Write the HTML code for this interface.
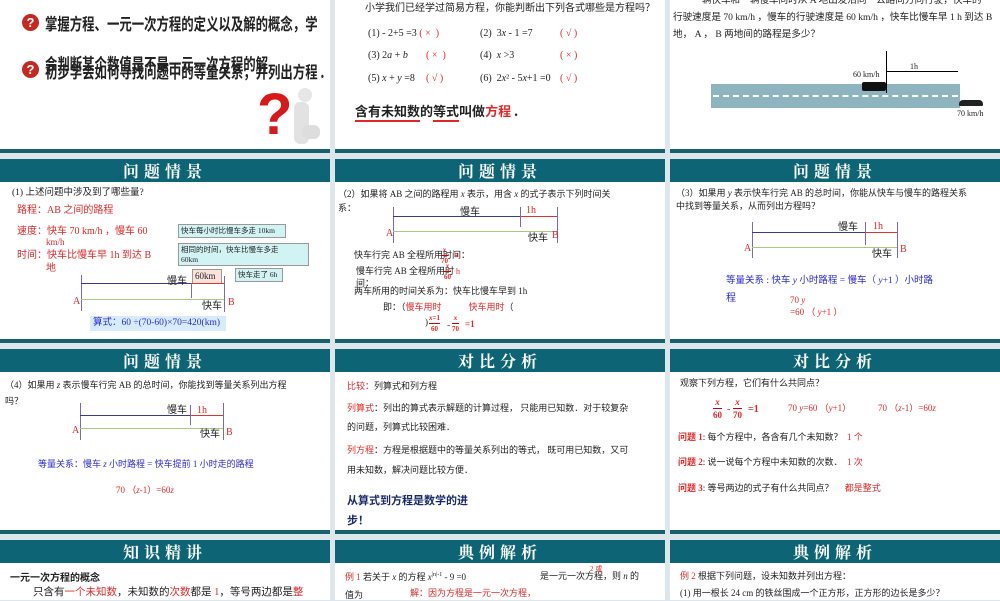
<!DOCTYPE html>
<html><head><meta charset="utf-8"><style>
*{margin:0;padding:0;box-sizing:border-box}
body{width:1000px;height:600px;overflow:hidden;background:#dde6ea;position:relative;font-family:"Liberation Serif","Noto Sans CJK SC",serif;color:#222}
.w{position:absolute;background:#fff}
.s{position:absolute;background:#17606e;height:4px}
.h{position:absolute;background:#0c6475;height:23px;color:#fff;text-align:center;font:bold 16px/23px "Noto Serif CJK SC","Noto Sans CJK SC",serif;letter-spacing:5px}
.t{position:absolute;white-space:nowrap;font-size:10px;line-height:1.1}
.r{color:#e02828}.b{color:#2a2ad8}
.l{position:absolute}
.q{position:absolute;width:17px;height:17px;border-radius:50%;background:#c42a22;color:#fff;font:bold 13px/17px "Liberation Sans",sans-serif;text-align:center}
.bx{position:absolute;background:#d2f3f3;border:1px solid #999;font-size:7.5px;padding:1px 2px;line-height:1.35;white-space:nowrap}
.fr{position:absolute;font-size:8px;text-align:center;line-height:1;font-weight:bold}
.fr span{display:block;border-top:1px solid #c00;padding-top:2px;margin-top:1px}
.big{font:bold 12.4px/1 'Noto Sans CJK SC',sans-serif;transform:scaleY(1.35);transform-origin:0 0}
</style></head><body>
<div class="w" style="left:0;top:0;width:330px;height:149px"></div>
<div class="w" style="left:335px;top:0;width:330px;height:149px"></div>
<div class="w" style="left:670px;top:0;width:330px;height:149px"></div>
<div class="s" style="left:0;top:149px;width:330px"></div><div class="s" style="left:335px;top:149px;width:330px"></div><div class="s" style="left:670px;top:149px;width:330px"></div>

<div class="h" style="left:0;top:159px;width:330px">问题情景</div><div class="h" style="left:335px;top:159px;width:330px">问题情景</div><div class="h" style="left:670px;top:159px;width:330px">问题情景</div>
<div class="w" style="left:0;top:182px;width:330px;height:157px"></div><div class="w" style="left:335px;top:182px;width:330px;height:157px"></div><div class="w" style="left:670px;top:182px;width:330px;height:157px"></div>
<div class="s" style="left:0;top:339px;width:330px"></div><div class="s" style="left:335px;top:339px;width:330px"></div><div class="s" style="left:670px;top:339px;width:330px"></div>

<div class="h" style="left:0;top:349px;width:330px">问题情景</div><div class="h" style="left:335px;top:349px;width:330px">对比分析</div><div class="h" style="left:670px;top:349px;width:330px">对比分析</div>
<div class="w" style="left:0;top:372px;width:330px;height:158px"></div><div class="w" style="left:335px;top:372px;width:330px;height:158px"></div><div class="w" style="left:670px;top:372px;width:330px;height:158px"></div>
<div class="s" style="left:0;top:530px;width:330px"></div><div class="s" style="left:335px;top:530px;width:330px"></div><div class="s" style="left:670px;top:530px;width:330px"></div>

<div class="h" style="left:0;top:540px;width:330px">知识精讲</div><div class="h" style="left:335px;top:540px;width:330px">典例解析</div><div class="h" style="left:670px;top:540px;width:330px">典例解析</div>
<div class="w" style="left:0;top:563px;width:330px;height:37px"></div><div class="w" style="left:335px;top:563px;width:330px;height:37px"></div><div class="w" style="left:670px;top:563px;width:330px;height:37px"></div>

<!-- Row1 col1 -->
<div class="q" style="left:22px;top:14px">?</div>
<div class="t big" style="left:45px;top:15px">掌握方程、一元一次方程的定义以及解的概念，学</div>
<div class="q" style="left:22px;top:61px">?</div>
<div class="t big" style="left:45px;top:55px">会判断某个数值是不是一元一次方程的解</div>
<div class="t big" style="left:45px;top:63px">初步学会如何寻找问题中的等量关系，并列出方程 .</div>
<div class="t" style="left:257px;top:86px;font:bold 58px/1 'Liberation Sans',sans-serif;color:#d8191a">?</div>
<div class="l" style="left:298px;top:88px;width:14px;height:14px;border-radius:50%;background:#e6e6e6"></div>
<div class="l" style="left:294px;top:102px;width:15px;height:42px;border-radius:6px;background:#e2e2e2"></div>
<div class="l" style="left:302px;top:125px;width:18px;height:14px;border-radius:6px;background:#ddd"></div>

<!-- Row1 col2 -->
<div class="t" style="left:365px;top:3px">小学我们已经学过简易方程，你能判断出下列各式哪些是方程吗？</div>
<div class="t" style="left:368px;top:28px">(1) - 2+5 =3 <span class="r">( ×&nbsp; )</span></div>
<div class="t" style="left:368px;top:50px">(3) 2<i>a</i> + <i>b</i></div><div class="t r" style="left:426px;top:50px">( × &nbsp;)</div>
<div class="t" style="left:368px;top:73px">(5) <i>x</i> + <i>y</i> =8</div><div class="t r" style="left:426px;top:73px">( √ )</div>
<div class="t" style="left:480px;top:28px">(2) &nbsp;3<i>x</i> - 1 =7</div><div class="t r" style="left:560px;top:28px">( √ )</div>
<div class="t" style="left:480px;top:50px">(4) &nbsp;<i>x</i> &gt;3</div><div class="t r" style="left:560px;top:50px">( × )</div>
<div class="t" style="left:480px;top:73px">(6) &nbsp;2<i>x</i>² - 5<i>x</i>+1 =0</div><div class="t r" style="left:560px;top:73px">( √ )</div>
<div class="t" style="left:355px;top:104px;font:bold 13px/1.1 'Noto Sans CJK SC',sans-serif"><span style="border-bottom:2px solid #e02828">含有未知数</span>的<span style="border-bottom:2px solid #e02828">等式</span>叫做<span class="r">方程</span> .</div>

<!-- Row1 col3 -->
<div class="t" style="left:673px;top:-4px;font-size:9.6px">&emsp;&emsp;一辆快车和一辆慢车同时从 A 地出发沿同一公路同方向行驶，快车的</div>
<div class="t" style="left:673px;top:13px;font-size:9.6px">行驶速度是 70 km/h ，慢车的行驶速度是 60 km/h ，快车比慢车早 1 h 到达 B</div>
<div class="t" style="left:673px;top:30px;font-size:9.6px">地， A ， B 两地间的路程是多少？</div>
<div class="l" style="left:711px;top:84px;width:249px;height:24px;background:#8db4bf"></div>
<div class="l" style="left:713px;top:95px;width:245px;border-top:2px dashed #fff"></div>
<div class="l" style="left:886px;top:51px;width:1px;height:42px;background:#000"></div>
<div class="l" style="left:886px;top:71px;width:72px;height:1px;background:#000"></div>
<div class="t" style="left:910px;top:63px;font-size:8px">1h</div>
<div class="t" style="left:853px;top:71px;font-size:8px">60 km/h</div>
<div class="l" style="left:862px;top:82px;width:24px;height:9px;background:#111;border-radius:2px"></div>
<div class="l" style="left:959px;top:100px;width:24px;height:6px;background:#222;border-radius:4px 4px 1px 1px"></div>
<div class="t" style="left:957px;top:110px;font-size:8px">70 km/h</div>

<!-- Row2 col1 -->
<div class="t" style="left:12px;top:188px;font-size:9.5px">(1) 上述问题中涉及到了哪些量?</div>
<div class="t r" style="left:17px;top:205px;font-size:10px">路程：AB 之间的路程</div>
<div class="t r" style="left:17px;top:226px;font-size:10px">速度：快车 70 km/h ，慢车 60</div>
<div class="t r" style="left:46px;top:238px;font-size:9px">km/h</div>
<div class="t r" style="left:17px;top:250px;font-size:10px">时间：快车比慢车早 1h 到达 B</div>
<div class="t r" style="left:46px;top:263px;font-size:10px">地</div>
<div class="bx" style="left:178px;top:224px;width:108px;height:14px">快车每小时比慢车多走 10km</div>
<div class="bx" style="left:178px;top:243px;width:131px;height:23px">相同的时间，快车比慢车多走<br>60km</div>
<div class="bx" style="left:235px;top:268px;width:48px;height:14px">快车走了 6h</div>
<div class="bx" style="left:192px;top:269px;width:30px;height:15px;background:#fbe3dc;font-size:9px;padding:0 2px">60km</div>
<div class="l" style="left:81px;top:275px;width:1px;height:36px;background:#7a6bb0"></div>
<div class="l" style="left:81px;top:283px;width:110px;height:1px;background:#3a3a8a"></div>
<div class="l" style="left:191px;top:283px;width:33px;height:1px;background:#d33"></div>
<div class="l" style="left:191px;top:283px;width:1px;height:15px;background:#7a6bb0"></div>
<div class="l" style="left:224px;top:276px;width:1px;height:36px;background:#7a6bb0"></div>
<div class="l" style="left:81px;top:299px;width:143px;height:1px;background:#a8c880"></div>
<div class="t r" style="left:73px;top:296px">A</div><div class="t r" style="left:228px;top:297px">B</div>
<div class="t" style="left:167px;top:276px">慢车</div><div class="t" style="left:202px;top:301px">快车</div>
<div class="l" style="left:90px;top:316px;width:136px;height:15px;background:#d6ecfb"></div>
<div class="t b" style="left:93px;top:318px;font-size:9.5px">算式：60 ÷(70-60)×70=420(km)</div>

<!-- Row2 col2 -->
<div class="t" style="left:338px;top:190px;font-size:9px">（2）如果将 AB 之间的路程用 <i>x</i> 表示，用含 <i>x</i> 的式子表示下列时间关</div>
<div class="t" style="left:338px;top:204px;font-size:9px">系：</div>
<div class="l" style="left:393px;top:207px;width:1px;height:36px;background:#7a6bb0"></div>
<div class="l" style="left:393px;top:216px;width:127px;height:1px;background:#3a3a8a"></div>
<div class="l" style="left:520px;top:216px;width:37px;height:1px;background:#d33"></div>
<div class="l" style="left:520px;top:207px;width:1px;height:20px;background:#7a6bb0"></div>
<div class="l" style="left:557px;top:207px;width:1px;height:36px;background:#7a6bb0"></div>
<div class="l" style="left:393px;top:231px;width:164px;height:1px;background:#a8c880"></div>
<div class="t r" style="left:386px;top:228px">A</div><div class="t r" style="left:552px;top:230px">B</div>
<div class="t" style="left:460px;top:207px">慢车</div><div class="t r" style="left:526px;top:205px">1h</div><div class="t" style="left:528px;top:233px">快车</div>
<div class="t" style="left:354px;top:251px;font-size:9px">快车行完 AB 全程所用时间：</div>
<div class="fr r" style="left:441px;top:247px;font-size:7px"><i>x</i><span>70</span></div><div class="t r" style="left:454px;top:251px;font-size:8px">h</div>
<div class="t" style="left:356px;top:267px;font-size:9px">慢车行完 AB 全程所用时</div>
<div class="fr r" style="left:444px;top:263px;font-size:7px"><i>x</i><span>60</span></div><div class="t r" style="left:456px;top:268px;font-size:8px">h</div>
<div class="t" style="left:356px;top:279px;font-size:9px">间：</div>
<div class="t" style="left:354px;top:287px;font-size:9px">两车所用的时间关系为：快车比慢车早到 1h</div>
<div class="t" style="left:383px;top:303px;font-size:9px">即：（<span class="r">慢车用时</span>&emsp;&emsp;&emsp;<span class="r">快车用时</span>（</div>
<div class="t" style="left:425px;top:318px;font-size:9px">)</div>
<div class="fr r" style="left:429px;top:315px;font-size:7px"><i>x</i>=1<span>60</span></div><div class="t r" style="left:447px;top:320px">-</div>
<div class="fr r" style="left:452px;top:315px;font-size:7px"><i>x</i><span>70</span></div><div class="t r" style="left:465px;top:320px;font-weight:bold;font-size:9px">=1</div>

<!-- Row2 col3 -->
<div class="t" style="left:676px;top:189px;font-size:9px">（3）如果用 <i>y</i> 表示快车行完 AB 的总时间，你能从快车与慢车的路程关系</div>
<div class="t" style="left:676px;top:202px;font-size:9px">中找到等量关系，从而列出方程吗？</div>
<div class="l" style="left:752px;top:222px;width:1px;height:36px;background:#7a6bb0"></div>
<div class="l" style="left:752px;top:232px;width:113px;height:1px;background:#3a3a8a"></div>
<div class="l" style="left:865px;top:232px;width:32px;height:1px;background:#d33"></div>
<div class="l" style="left:865px;top:222px;width:1px;height:23px;background:#7a6bb0"></div>
<div class="l" style="left:897px;top:222px;width:1px;height:36px;background:#7a6bb0"></div>
<div class="l" style="left:752px;top:247px;width:145px;height:1px;background:#a8c880"></div>
<div class="t r" style="left:744px;top:243px">A</div><div class="t r" style="left:900px;top:244px">B</div>
<div class="t" style="left:838px;top:222px">慢车</div><div class="t r" style="left:873px;top:221px">1h</div><div class="t" style="left:872px;top:249px">快车</div>
<div class="t b" style="left:726px;top:276px;font-size:9.5px">等量关系 : 快车 <i>y</i> 小时路程 = 慢车（ <i>y</i>+1 ）小时路</div>
<div class="t b" style="left:726px;top:293px">程</div>
<div class="t r" style="left:790px;top:296px;font-size:9px">70 <i>y</i></div>
<div class="t r" style="left:790px;top:308px;font-size:9px">=60 （ <i>y</i>+1 ）</div>

<!-- Row3 col1 -->
<div class="t" style="left:5px;top:381px;font-size:9px">（4）如果用 <i>z</i> 表示慢车行完 AB 的总时间，你能找到等量关系列出方程</div>
<div class="t" style="left:5px;top:397px;font-size:9px">吗？</div>
<div class="l" style="left:80px;top:403px;width:1px;height:37px;background:#7a6bb0"></div>
<div class="l" style="left:80px;top:415px;width:110px;height:1px;background:#3a3a8a"></div>
<div class="l" style="left:190px;top:415px;width:33px;height:1px;background:#d33"></div>
<div class="l" style="left:190px;top:405px;width:1px;height:20px;background:#7a6bb0"></div>
<div class="l" style="left:223px;top:403px;width:1px;height:37px;background:#7a6bb0"></div>
<div class="l" style="left:80px;top:428px;width:143px;height:1px;background:#a8c880"></div>
<div class="t r" style="left:72px;top:425px">A</div><div class="t r" style="left:226px;top:427px">B</div>
<div class="t" style="left:167px;top:405px">慢车</div><div class="t r" style="left:197px;top:405px">1h</div><div class="t" style="left:200px;top:429px">快车</div>
<div class="t b" style="left:38px;top:460px;font-size:9px">等量关系：慢车 <i>z</i> 小时路程 = 快车提前 1 小时走的路程</div>
<div class="t r" style="left:116px;top:486px;font-size:9px">70 （<i>z</i>-1）=60<i>z</i></div>

<!-- Row3 col2 -->
<div class="t" style="left:347px;top:382px;font-size:9px"><span class="r">比较：</span>列算式和列方程</div>
<div class="t" style="left:347px;top:404px;font-size:9px"><span class="r">列算式</span>：列出的算式表示解题的计算过程， 只能用已知数．对于较复杂</div>
<div class="t" style="left:347px;top:423px;font-size:9px">的问题，列算式比较困难．</div>
<div class="t" style="left:347px;top:446px;font-size:9px"><span class="r">列方程</span>：方程是根据题中的等量关系列出的等式， 既可用已知数，又可</div>
<div class="t" style="left:347px;top:466px;font-size:9px">用未知数，解决问题比较方便．</div>
<div class="t" style="left:347px;top:494px;font:bold 11px/1.1 'Noto Sans CJK SC',sans-serif;color:#1a2a6a">从算式到方程是数学的进</div>
<div class="t" style="left:347px;top:514px;font:bold 11px/1.1 'Noto Sans CJK SC',sans-serif;color:#1a2a6a">步！</div>

<!-- Row3 col3 -->
<div class="t" style="left:680px;top:379px;font-size:9px">观察下列方程，它们有什么共同点？</div>
<div class="fr r" style="left:713px;top:398px;font-size:9px"><i>x</i><span>60</span></div><div class="t r" style="left:727px;top:404px">-</div>
<div class="fr r" style="left:733px;top:398px;font-size:9px"><i>x</i><span>70</span></div><div class="t r" style="left:748px;top:404px;font-weight:bold">=1</div>
<div class="t r" style="left:788px;top:404px;font-size:9px">70 <i>y</i>=60 （<i>y</i>+1）</div>
<div class="t r" style="left:878px;top:404px;font-size:9px">70 （<i>z</i>-1）=60<i>z</i></div>
<div class="t" style="left:678px;top:433px;font-size:9px"><span class="r" style="font-weight:bold">问题 1</span>: 每个方程中，各含有几个未知数？ <span class="r">&nbsp;1 个</span></div>
<div class="t" style="left:678px;top:458px;font-size:9px"><span class="r" style="font-weight:bold">问题 2</span>: 说一说每个方程中未知数的次数． &nbsp;<span class="r">1 次</span></div>
<div class="t" style="left:678px;top:484px;font-size:9px"><span class="r" style="font-weight:bold">问题 3</span>: 等号两边的式子有什么共同点？ &emsp;<span class="r">都是整式</span></div>

<!-- Row4 -->
<div class="t" style="left:10px;top:571px;font:bold 10px/1.1 'Noto Sans CJK SC',sans-serif">一元一次方程的概念</div>
<div class="t" style="left:33px;top:587px;font-size:10.5px">只含有<span class="r">一个未知数</span>，未知数的<span class="r">次数</span>都是 <span class="r">1</span>，等号两边都是<span class="r">整</span></div>
<div class="t" style="left:345px;top:572px;font-size:9px"><span class="r">例 1</span> 若关于 <i>x</i> 的方程 <i>x</i><sup style="font-size:6px">|n|-1</sup> - 9 =0</div>
<div class="t" style="left:540px;top:572px;font-size:9px">是一元一次方程，则 <i>n</i> 的</div>
<div class="t r" style="left:590px;top:566px;font-size:7px">2 或</div>
<div class="t" style="left:345px;top:591px;font-size:9px">值为</div>
<div class="t r" style="left:410px;top:589px;font-size:9px">解：因为方程是一元一次方程，</div>
<div class="t" style="left:680px;top:572px;font-size:9px"><span class="r">例 2</span> 根据下列问题，设未知数并列出方程：</div>
<div class="t" style="left:680px;top:589px;font-size:9px">(1) 用一根长 24 cm 的铁丝围成一个正方形，正方形的边长是多少？</div>
</body></html>
